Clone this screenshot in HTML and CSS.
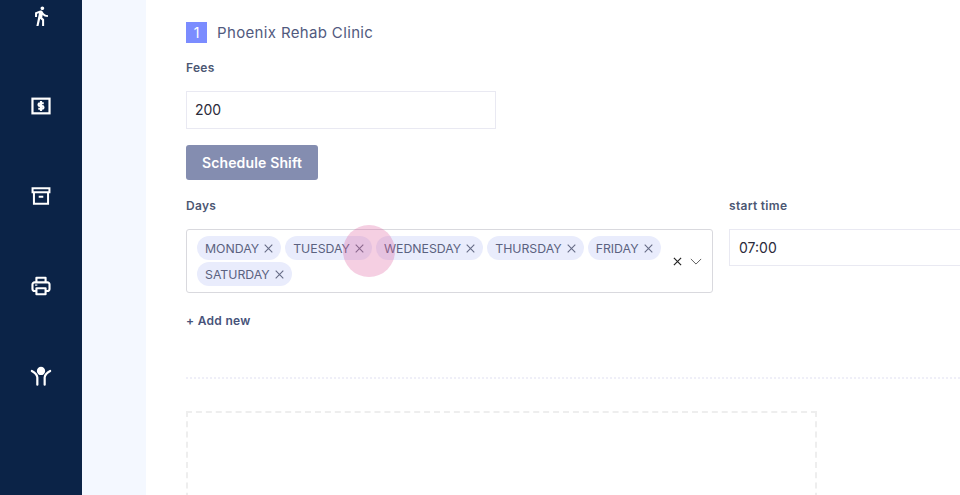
FILE: index.html
```html
<!DOCTYPE html>
<html lang="en">
<head>
<meta charset="UTF-8">
<meta name="viewport" content="width=device-width, initial-scale=1.0">
<title>Phoenix Rehab Clinic</title>
<link rel="stylesheet" href="styles.css">
</head>
<body>

<div class="page">
    <nav class="sidebar">
        <svg class="nav-icon" viewBox="0 0 24 24" fill="#fff"><path d="M13.500 5.500c1.100 0 2-.9 2-2s-.9-2-2-2-2 .9-2 2 .9 2 2 2zM9.800 8.900L7 23h2.300l1.800-8 2.100 2v6h2.200v-7.500l-2.100-2 .6-3C14.800 12 16.800 13 19.500 13v-2.200c-2.200 0-3.900-.8-4.800-2.200l-1-1.600c-.4-.6-1-1-1.700-1-.3 0-.5.1-.8.1L5.500 8.300V13h2.200V9.600l2.100-.7z"/></svg>
        <svg class="nav-icon" viewBox="0 0 24 24" fill="none" stroke="#fff" stroke-width="2.400"><rect x="2.700" y="4" width="18.600" height="16"/><path d="M15 9h-4.200a1.500 1.500 0 0 0 0 3h2.400a1.500 1.500 0 0 1 0 3H9M12 6.500v11"/></svg>
        <svg class="nav-icon" viewBox="0 0 24 24" fill="none" stroke="#fff" stroke-width="2.200"><path d="M2.800 3.500h18.400v4.500H2.800zM4.300 8v12.500h15.400V8M9.500 12.800h5"/></svg>
        <svg class="nav-icon" viewBox="0 0 24 24" fill="none" stroke="#fff" stroke-width="2.300" stroke-linejoin="round"><path d="M7 8V3h10v5M7 17.500H5a2.300 2.300 0 0 1-2.300-2.300V10.300A2.300 2.300 0 0 1 5 8h14a2.300 2.300 0 0 1 2.300 2.300v4.900a2.300 2.300 0 0 1-2.300 2.300h-2"/><path d="M7 14.500h10v6.500H7z"/><path d="M5.500 11h2.500" stroke-width="1.300"/></svg>
        <svg class="nav-icon" viewBox="0 0 24 24" fill="none" stroke="#fff" stroke-width="2.400" stroke-linecap="round"><circle cx="12" cy="6.500" r="4.500" fill="#fff" stroke="none"/><path d="M2 6.500c3 1.500 5.500 3.500 6 7v8M22 6.500c-3 1.500-5.500 3.500-6 7v8"/></svg>
    </nav>
    <div class="strip"></div>
    <main class="content">
        <div class="clinic-title">
            <span class="clinic-num">1</span>
            <span class="clinic-name">Phoenix Rehab Clinic</span>
        </div>
        <label class="field-label">Fees</label>
        <div class="text-input fees-input">200</div>
        <button class="btn-shift">Schedule Shift</button>
        <div class="shift-row">
            <div class="days-col">
                <label class="field-label">Days</label>
                <div class="multi-select">
                    <div class="chips">
                        <span class="chip">MONDAY <svg class="chip-x" viewBox="0 0 9 9"><path d="M.7.7l7.600 7.600M8.300.7L.7 8.300"/></svg></span>
                        <span class="chip">TUESDAY <svg class="chip-x" viewBox="0 0 9 9"><path d="M.7.7l7.600 7.600M8.300.7L.7 8.300"/></svg></span>
                        <span class="chip">WEDNESDAY <svg class="chip-x" viewBox="0 0 9 9"><path d="M.7.7l7.600 7.600M8.300.7L.7 8.300"/></svg></span>
                        <span class="chip">THURSDAY <svg class="chip-x" viewBox="0 0 9 9"><path d="M.7.7l7.600 7.600M8.300.7L.7 8.300"/></svg></span>
                        <span class="chip">FRIDAY <svg class="chip-x" viewBox="0 0 9 9"><path d="M.7.7l7.600 7.600M8.300.7L.7 8.300"/></svg></span>
                        <span class="chip">SATURDAY <svg class="chip-x" viewBox="0 0 9 9"><path d="M.7.7l7.600 7.600M8.300.7L.7 8.300"/></svg></span>
                    </div>
                    <div class="select-actions">
                        <svg class="clear-icon" viewBox="0 0 10 10" fill="none" stroke="#222" stroke-width="1.300"><path d="M1 1l8 8M9 1l-8 8"/></svg>
                        <svg class="arrow-icon" viewBox="0 0 14 8" fill="none" stroke="#555" stroke-width="1.100"><path d="M1 1l6 6 6-6"/></svg>
                    </div>
                </div>
            </div>
            <div class="time-col">
                <label class="field-label">start time</label>
                <div class="text-input time-input">07:00</div>
            </div>
        </div>
        <div class="add-new">+ Add new</div>
        <hr class="divider">
        <div class="drop-box"></div>
    </main>
    <div class="ripple"></div>
</div>

</body>
</html>
```

FILE: styles.css
```css
html, body {
    margin: 0;
    height: 100%;
    overflow: hidden;
    background: #fff;
}
body {
    font-family: "Inter", "Open Sans", Arial, sans-serif;
}
.page {
    display: flex;
    position: relative;
    height: 495px;
    overflow: hidden;
}
.sidebar {
    width: 82px;
    flex: none;
    background: #0b2347;
    display: flex;
    flex-direction: column;
    align-items: center;
    gap: 68px;
    padding-top: 5px;
    box-sizing: border-box;
}
.nav-icon {
    width: 22px;
    height: 22px;
    flex: none;
}
.strip {
    width: 64px;
    flex: none;
    background: #f4f8ff;
}
.content {
    flex: 1;
    min-width: 0;
    padding: 22px 0 0 40px;
}
.clinic-title {
    display: flex;
    align-items: center;
    gap: 10px;
    height: 21px;
}
.clinic-num {
    width: 21px;
    height: 21px;
    background: #7b8cff;
    color: #fff;
    font-size: 14px;
    line-height: 21px;
    text-align: center;
}
.clinic-name {
    font-size: 15px;
    color: #515a7e;
    letter-spacing: 0.35px;
}
.field-label {
    display: block;
    font-size: 12px;
    font-weight: 600;
    color: #4c5773;
    line-height: 16px;
    letter-spacing: 0.3px;
}
.clinic-title + .field-label {
    margin-top: 17px;
}
.text-input {
    box-sizing: border-box;
    height: 38px;
    border: 1px solid #e9e9f2;
    font-size: 14px;
    line-height: 36px;
    padding-left: 8px;
    color: #2b2b3a;
}
.fees-input {
    width: 310px;
    margin-top: 15px;
}
.btn-shift {
    display: block;
    margin-top: 16px;
    width: 132px;
    height: 35px;
    background: #848db0;
    color: #fff;
    border: none;
    border-radius: 3px;
    font-family: inherit;
    font-size: 14px;
    font-weight: 600;
    letter-spacing: 0.15px;
    padding: 0;
}
.shift-row {
    display: flex;
    gap: 16px;
    margin-top: 18px;
}
.days-col {
    width: 527px;
    flex: none;
}
.time-col {
    width: 260px;
    flex: none;
}
.multi-select {
    box-sizing: border-box;
    margin-top: 15px;
    height: 64px;
    border: 1px solid #d9d9de;
    border-radius: 3px;
    display: flex;
    align-items: center;
    padding: 6px 10px;
}
.chips {
    flex: 1;
    display: flex;
    flex-wrap: wrap;
    gap: 2px 4px;
}
.chip {
    display: inline-flex;
    align-items: center;
    gap: 5px;
    height: 24px;
    padding: 0 8px;
    border-radius: 12px;
    background: #e9ecfc;
    color: #5b6280;
    font-size: 12.300px;
}
.chip-x {
    width: 9px;
    height: 9px;
    fill: none;
    stroke: #666c86;
    stroke-width: 1.100;
}
.select-actions {
    display: flex;
    align-items: center;
    gap: 8px;
    flex: none;
}
.clear-icon {
    width: 9px;
    height: 9px;
}
.arrow-icon {
    width: 12px;
    height: 7px;
}
.time-input {
    margin-top: 15px;
    width: 100%;
    height: 37px;
    line-height: 35px;
    padding-left: 9px;
}
.add-new {
    margin-top: 20px;
    font-size: 12px;
    font-weight: 600;
    color: #47537a;
    line-height: 16px;
    letter-spacing: 0.3px;
}
.divider {
    margin: 48px 0 0;
    border: none;
    border-top: 2px dotted #efeff8;
    height: 0;
}
.drop-box {
    margin-top: 32px;
    box-sizing: border-box;
    width: 631px;
    height: 200px;
    border: 2px dashed #eeeeee;
}
.ripple {
    position: absolute;
    left: 343px;
    top: 225px;
    width: 52px;
    height: 52px;
    border-radius: 50%;
    background: rgba(222, 95, 160, 0.3);
}
```
